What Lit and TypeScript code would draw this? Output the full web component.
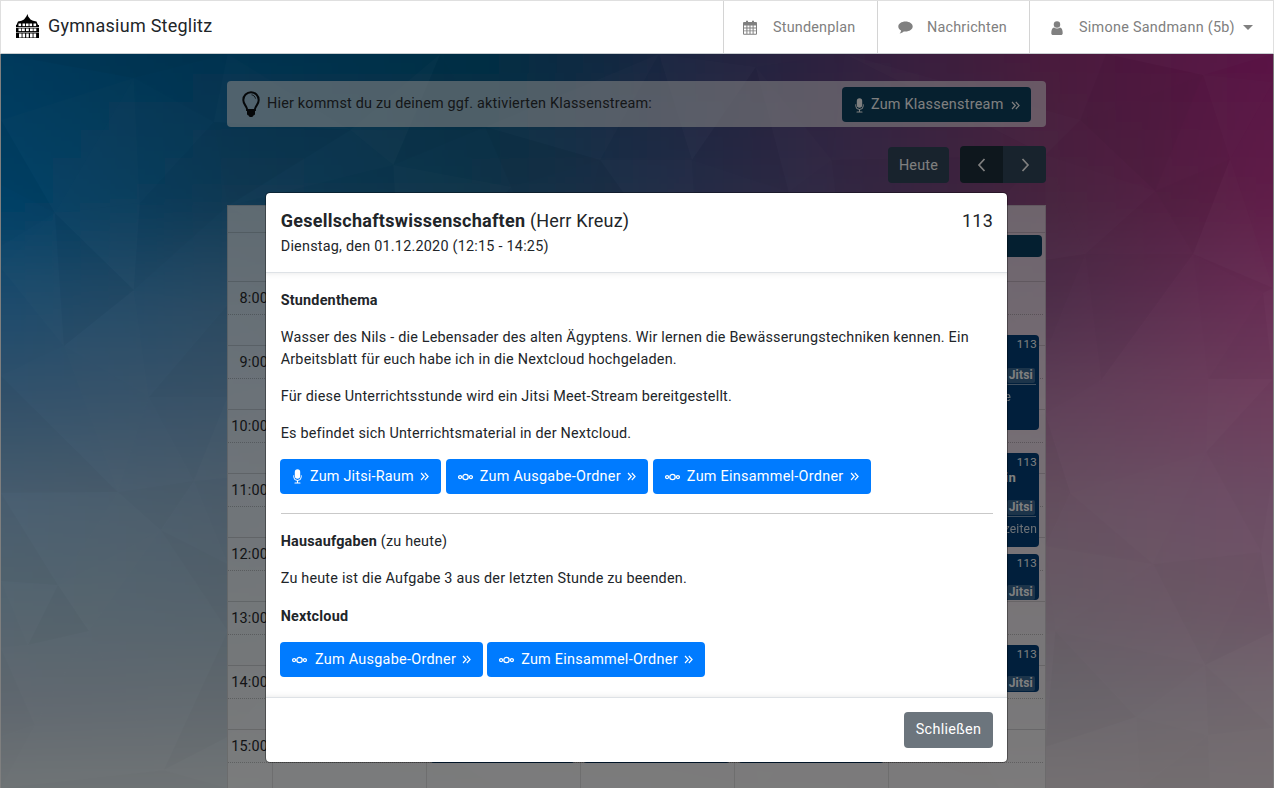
import { LitElement, html, css, svg } from "lit";
import { customElement } from "lit/decorators.js";

/* ---------- low-poly backdrop ---------- */
type P = [number, number];
const PTS: P[] = [
  [0,54],[227,54],[440,54],[659,54],[845,54],[1107,54],[1274,54],
  [133,78],[213,122],[54,213],[139,203],[227,206],[0,120],[0,185],[0,246],[0,268],[133,290],[227,305],[63,346],[0,376],
  [148,397],[227,397],[117,492],[0,493],[193,481],[227,478],[160,530],[57,585],[0,581],[227,564],[88,631],[227,631],[27,645],[0,648],[34,725],[0,737],[163,770],[227,737],[0,788],[227,788],
  [350,130],[485,127],[393,165],[511,187],[600,160],[692,160],[756,67],[789,192],[832,160],
  [400,300],[560,330],[700,300],[850,320],[950,250],[420,450],[600,420],[780,470],[950,430],[350,600],[550,620],[720,580],[900,600],[420,740],[620,760],[820,720],[500,788],[760,788],[1000,788],
  [1081,120],[1204,75],[1231,159],[1274,82],[1156,191],[1046,155],[1086,254],[1194,254],[1264,293],[1274,288],[1046,260],[1102,380],[1209,379],[1274,379],[1046,354],[1207,452],[1274,473],[1071,493],[1046,414],[1154,564],[1262,552],[1046,546],[1056,631],[1206,665],[1274,632],[1137,717],[1209,735],[1274,728],[1046,747],[1141,788],[1211,788],[1274,788],
];

function delaunay(pts: P[]): [number, number, number][] {
  const all: P[] = [...pts, [-5000, -5000], [7000, -5000], [637, 9000]];
  const n = pts.length;
  let tris: [number, number, number][] = [[n, n + 1, n + 2]];
  const inCircle = (t: [number, number, number], p: P) => {
    const [a, b, c] = t.map((i) => all[i]);
    const ax = a[0] - p[0], ay = a[1] - p[1];
    const bx = b[0] - p[0], by = b[1] - p[1];
    const cx = c[0] - p[0], cy = c[1] - p[1];
    const d =
      (ax * ax + ay * ay) * (bx * cy - cx * by) -
      (bx * bx + by * by) * (ax * cy - cx * ay) +
      (cx * cx + cy * cy) * (ax * by - bx * ay);
    const o = (b[0] - a[0]) * (c[1] - a[1]) - (b[1] - a[1]) * (c[0] - a[0]);
    return o > 0 ? d > 0 : d < 0;
  };
  pts.forEach((p, i) => {
    const bad = tris.filter((t) => inCircle(t, p));
    const edges = new Map<string, [number, number]>();
    for (const t of bad) {
      for (const [u, v] of [[t[0], t[1]], [t[1], t[2]], [t[2], t[0]]]) {
        const k = u < v ? `${u}_${v}` : `${v}_${u}`;
        if (edges.has(k)) edges.delete(k);
        else edges.set(k, [u, v]);
      }
    }
    tris = tris.filter((t) => !bad.includes(t));
    edges.forEach(([u, v]) => tris.push([u, v, i]));
  });
  return tris.filter((t) => t.every((i) => i < n));
}

const XS = [0, 227, 480, 700, 1046, 1274];
const YS = [54, 200, 300, 400, 500, 600, 700, 788];
const GRID = [
  "003a5c 003350 012f45 1e2440 481a3c 5a1245",
  "004168 103a55 0f3348 252c47 46233e 601c48",
  "1c4c6e 2a4a62 30424f 3f3a50 4f2f4b 6a2e56",
  "33526c 3a5368 454c5e 504858 5f4058 703e5e",
  "4a6072 4c5c6a 555a66 5e5664 665060 6f4e67",
  "546570 54626c 5b606a 605c66 665a64 6f5667",
  "606870 626a70 656770 68666c 6a666c 72676f",
  "6f7476 707476 727374 737273 74707272 756f71",
].map((r) => r.split(" ").map((h) => [0, 2, 4].map((i) => parseInt(h.slice(i, i + 2), 16))));

const seg = (arr: number[], v: number): [number, number] => {
  for (let i = 0; i < arr.length - 1; i++) {
    if (v <= arr[i + 1]) return [i, Math.max(0, (v - arr[i]) / (arr[i + 1] - arr[i]))];
  }
  return [arr.length - 2, 1];
};

function colour(x: number, y: number): string {
  const [i, u] = seg(XS, x);
  const [j, v] = seg(YS, y);
  const c = [0, 1, 2].map((k) => {
    const top = GRID[j][i][k] * (1 - u) + GRID[j][i + 1][k] * u;
    const bot = GRID[j + 1][i][k] * (1 - u) + GRID[j + 1][i + 1][k] * u;
    return Math.min(255, Math.round((top * (1 - v) + bot * v) * 2));
  });
  return `rgb(${c.join(",")})`;
}

const BASE: { x: number; y: number; fill: string }[] = [];
for (let x = -60; x < 1340; x += 28) {
  for (let y = -10; y < 850; y += 28) {
    BASE.push({ x, y, fill: colour(x + 14, y + 14) });
  }
}

const FACETS = delaunay(PTS).map((t, idx) => {
  const [a, b, c] = t.map((i) => PTS[i]);
  const s = ((idx * 37) % 7) - 3;
  const cy = (a[1] + b[1] + c[1]) / 3;
  return {
    points: `${a[0]},${a[1]} ${b[0]},${b[1]} ${c[0]},${c[1]}`,
    fill: s > 0 ? "#fff" : "#000",
    opacity: Math.abs(s) * (0.012 - 0.006 * Math.min(1, cy / 788)),
  };
});

/* ---------- icons ---------- */
const mic = () => html`<svg class="ico mic" width="9" height="15" viewBox="0 0 9 15" aria-hidden="true">
  <rect x="1.8" y="0.3" width="5.4" height="9.4" rx="2.7" fill="currentColor" />
  <path d="M.7 6.4v1.3a3.8 3.8 0 0 0 7.6 0V6.4" fill="none" stroke="currentColor" stroke-width="1" />
  <path d="M4.5 11.5v2M2 14h5" fill="none" stroke="currentColor" stroke-width="1.1" stroke-linecap="round" />
</svg>`;
const dbl = () => html`<svg class="ico dbl" width="9" height="9" viewBox="0 0 9 9" aria-hidden="true">
  <path d="M1 1l3.3 3.5L1 8M4.8 1l3.3 3.5L4.8 8" fill="none" stroke="currentColor" stroke-width="1.15" />
</svg>`;
const cloud = () => html`<svg class="ico" width="15" height="8" viewBox="0 0 15 8" aria-hidden="true">
  <g fill="none" stroke="currentColor" stroke-width="1.25">
    <circle cx="7.5" cy="4" r="2.7" /><circle cx="2.1" cy="4" r="1.5" /><circle cx="12.9" cy="4" r="1.5" />
  </g>
</svg>`;
const calendar = () => html`<svg class="ico" width="14" height="15" viewBox="0 0 14 15" aria-hidden="true">
  <path fill="currentColor" fill-rule="evenodd" d="M1 2h2V.8h2V2h4V.8h2V2h2a1 1 0 0 1 1 1v10.8a1 1 0 0 1-1 1H1a1 1 0 0 1-1-1V3a1 1 0 0 1 1-1zM1 5.5v2h2.4v-2zM4.4 5.5v2h2.1v-2zM7.5 5.5v2h2.1v-2zM10.6 5.5v2H13v-2zM1 8.4v2h2.4v-2zM4.4 8.4v2h2.1v-2zM7.5 8.4v2h2.1v-2zM10.6 8.4v2H13v-2zM1 11.3v2.4h2.4v-2.4zM4.4 11.3v2.4h2.1v-2.4zM7.5 11.3v2.4h2.1v-2.4zM10.6 11.3v2.4H13v-2.4z" />
</svg>`;
const comment = () => html`<svg class="ico" width="15" height="13" viewBox="0 0 15 13" aria-hidden="true">
  <path fill="currentColor" d="M7.5.5c4 0 7.2 2.2 7.2 5s-3.200 5-7.200 5c-.6 0-1.200 0-1.800-.1C4.700 11.400 3.200 12.300 1.500 12.600c.8-.8 1.400-1.700 1.600-3C1.300 8.700.3 7.200.3 5.500c0-2.800 3.200-5 7.200-5z" />
</svg>`;
const user = () => html`<svg class="ico" width="12" height="14" viewBox="0 0 11 13" aria-hidden="true">
  <circle cx="5.500" cy="3.300" r="3" fill="currentColor" />
  <path fill="currentColor" d="M.2 11.300c0-3 .8-5 2.600-5.300.7.600 1.600.9 2.700.9s2-.3 2.700-.9c1.800.3 2.600 2.300 2.600 5.300 0 1-.7 1.700-1.700 1.700H1.900C.9 13 .2 12.300.2 11.300z" />
</svg>`;
const bulb = () => html`<svg class="bulb" width="18" height="27" viewBox="0 0 18 27" aria-hidden="true">
  <path d="M9 1.300a7.700 7.700 0 0 0-7.700 7.700c0 3.600 2.300 5 3.400 8 .3.800.4 1.500.4 2h7.800c0-.5.100-1.200.4-2 1.100-3 3.400-4.400 3.400-8A7.700 7.700 0 0 0 9 1.300z" fill="none" stroke="#0b0f12" stroke-width="2" />
  <path d="M5 18.500h8v4.200c0 1-.8 1.500-1.600 1.700-.3 1-1.200 1.600-2.400 1.600s-2.100-.6-2.400-1.600C5.800 24.200 5 23.700 5 22.700z" fill="#0b0f12" />
  <path d="M9.500 3.800c2 .2 3.700 1.800 4 3.800" fill="none" stroke="#0b0f12" stroke-width=".8" />
</svg>`;
const school = () => html`<svg class="logo" width="23" height="24" viewBox="0 0 23 24" aria-hidden="true">
  <path fill="#000" d="M11.500 0l.7 2.600 2.300 2.900 2.500 1.300 3.500.7 1.500 3.500H23V24H0V11h.5L2 7.500l3.500-.7L8 5.500l2.300-2.900z" />
  <g fill="#fff">
    ${[2.5, 6.5, 10, 13.500, 17.500].map((x) => svg`<rect x=${x} y="9.500" width="2.600" height="2.600" />`)}
    ${[2.5, 6, 10, 14, 17.500].map((x) => svg`<rect x=${x} y="14.500" width="2.800" height="2.600" />`)}
    ${[3, 6.500, 10.200, 14, 17.500].map((x) => svg`<rect x=${x} y="19.500" width="2.600" height="4" />`)}
    <rect x="0" y="13" width="23" height=".7" />
    <rect x="0" y="18.300" width="23" height=".5" />
  </g>
</svg>`;
const chev = (d: string) => html`<svg width="10" height="16" viewBox="0 0 10 16" aria-hidden="true">
  <path d=${d} fill="none" stroke="currentColor" stroke-width="1.700" />
</svg>`;

const HOURS = ["8:00", "9:00", "10:00", "11:00", "12:00", "13:00", "14:00", "15:00"];

interface Ev { l: number; t: number; w: number; h: number; room?: string; jitsi?: number; bold?: string; note?: string; noteEnd?: number; noteTop?: number; }
const EVENTS: Ev[] = [
  { l: 665, t: 29, w: 149, h: 22 },
  { l: 665, t: 129, w: 146, h: 95, room: "113", jitsi: 33, note: "Aufgabe", noteEnd: 28, noteTop: 53 },
  { l: 665, t: 247, w: 146, h: 94, room: "113", bold: "Latein", jitsi: 47, note: "Sprechzeiten", noteEnd: 2, noteTop: 67 },
  { l: 665, t: 348, w: 146, h: 46, room: "113", jitsi: 31 },
  { l: 665, t: 439, w: 146, h: 47, room: "113", jitsi: 31 },
  { l: 202, t: 494, w: 145, h: 63 },
  { l: 355, t: 494, w: 147, h: 63 },
  { l: 510, t: 494, w: 146, h: 63 },
];

@customElement("app-root")
export class AppRoot extends LitElement {
  static styles = css`
    :host {
      display: flex;
      flex-direction: column;
      width: 100%;
      height: 100vh;
      overflow: hidden;
      background: #fff;
      font-family: Roboto, "Liberation Sans", sans-serif;
      font-size: 14.4px;
      line-height: 21.6px;
      letter-spacing: 0.2px;
      color: #212529;
    }
    * { box-sizing: border-box; }
    svg { display: block; flex: none; }

    /* navbar */
    .nav {
      flex: none;
      height: 54px;
      display: flex;
      align-items: stretch;
      background: #fff;
      border: 1px solid #dfdfdf;
      border-bottom-color: #c9ced1;
    }
    .brand {
      display: flex;
      align-items: center;
      gap: 9px;
      margin-left: 15px;
      padding-bottom: 2px;
      font-size: 18px;
      letter-spacing: 0.25px;
      color: #212529;
      margin-right: auto;
    }
    .item {
      flex: none;
      width: 154px;
      display: flex;
      align-items: center;
      border-left: 1px solid #d4d4d4;
      padding: 1px 0 0 19px;
      color: #808080;
    }
    .item .ico { color: #808080; }
    .item .txt { margin-left: 16px; }
    .item.c { width: 152px; padding-left: 20px; }
    .item.c .txt { margin-left: 14px; }
    .item.u { width: 244px; padding-left: 21px; letter-spacing: 0.27px; }
    .caret {
      margin-left: 8px;
      border-top: 5px solid #808080;
      border-left: 5px solid transparent;
      border-right: 5px solid transparent;
    }

    /* page */
    .page {
      position: relative;
      flex: 1;
      min-height: 0;
      overflow: hidden;
      padding: 27px 0 0 227px;
    }
    .bg {
      position: absolute;
      left: 1px;
      top: 0;
      width: 1272px;
      height: 734px;
    }
    .wrap {
      position: relative;
      width: 819px;
    }
    .alert {
      height: 46px;
      display: flex;
      align-items: center;
      padding: 0 15px 0 15px;
      background: rgba(255, 255, 255, 0.6);
      border-radius: 4px;
    }
    .alert .lead { margin-left: 7px; color: #2a2e32; }
    .alert .btn { margin: 1px 0 0 auto; padding-top: 1px; padding-right: 11.5px; letter-spacing: 0.25px; }
    .alert .btn .mic { margin-right: 7px; }
    .btn {
      display: inline-flex;
      align-items: center;
      height: 35px;
      padding: 0 12px;
      border-radius: 4px;
      color: #fff;
      white-space: nowrap;
      letter-spacing: 0.28px;
    }
    .btn .mic { margin: 0 8px 0 1px; }
    .btn .dbl { margin-left: 7px; }
    .btn.dark { background: #0c405e; }
    .bar {
      display: flex;
      justify-content: flex-end;
      align-items: center;
      margin-top: 19px;
      gap: 11px;
    }
    .heute {
      display: flex;
      align-items: center;
      justify-content: center;
      width: 61px;
      height: 36px;
      padding-top: 2px;
      background: #30465a;
      color: #fff;
      border-radius: 4px;
    }
    .group { display: flex; height: 37px; border-radius: 4px; overflow: hidden; }
    .group div {
      width: 43px;
      display: flex;
      align-items: center;
      justify-content: center;
      color: #fff;
      background: #30465a;
    }
    .group div.on { background: #1c2e3a; }

    .cal {
      position: relative;
      margin-top: 22px;
      background: rgba(255, 255, 255, 0.7);
      border: 1px solid rgba(0, 0, 0, 0.12);
      border-bottom: 0;
    }
    .row {
      position: relative;
      display: grid;
      grid-template-columns: 45px repeat(4, 154px) 1fr;
      border-bottom: 1px solid rgba(0, 0, 0, 0.14);
    }
    .row > div { border-right: 1px solid rgba(0, 0, 0, 0.1); }
    .row > div:last-child { border-right: 0; }
    .h1 { height: 27px; }
    .h2 { height: 49px; }
    .hour { height: 64px; }
    .hour::after {
      content: "";
      position: absolute;
      left: 0;
      right: 2px;
      top: 32px;
      border-top: 1px dotted rgba(0, 0, 0, 0.22);
    }
    .time { padding: 6px 4px 0 0; text-align: right; white-space: nowrap; color: #26292c; }
    .ev {
      position: absolute;
      background: #023e78;
      border-radius: 4px;
      color: #fff;
      overflow: hidden;
      font-size: 12px;
      line-height: 18px;
    }
    .ev.head { background: #083e60; }
    .ev .room { position: absolute; right: 2px; top: 0; font-size: 11.5px; letter-spacing: 0.3px; }
    .ev .nm { position: absolute; right: 23px; top: 16px; font-weight: 700; white-space: nowrap; font-size: 13px; }
    .ev .jitsi {
      position: absolute;
      right: 4px;
      padding: 0 2px;
      height: 15px;
      line-height: 15px;
      font-weight: 700;
      background: rgba(255, 255, 255, 0.22);
      border-radius: 2px;
    }
    .ev .note {
      position: absolute;
      white-space: nowrap;
      opacity: 0.85;
      font-size: 12px;
    }
    .ev .rule { position: absolute; left: 0; right: 3px; height: 1px; background: rgba(255, 255, 255, 0.5); }

    /* modal */
    .backdrop {
      position: absolute;
      inset: 0;
      background: rgba(0, 0, 0, 0.5);
      padding: 138px 1px 0 0;
      display: flex;
      justify-content: center;
      align-items: flex-start;
    }
    .modal {
      width: 743px;
      background: #fff;
      border: 1px solid rgba(0, 0, 0, 0.35);
      background-clip: padding-box;
      border-radius: 5px;
    }
    .mh {
      display: flex;
      justify-content: space-between;
      padding: 14px 14px 0 15px;
      height: 80px;
      border-bottom: 1px solid #dee2e6;
    }
    .title { font-size: 18px; line-height: 27px; letter-spacing: 0.18px; margin-left: -0.3px; }
    .title b { font-weight: 700; letter-spacing: 0.26px; }
    .date { margin: 2px 0 0 -0.3px; letter-spacing: 0.23px; }
    .roomno { font-size: 18px; line-height: 27px; letter-spacing: 0.2px; }
    .mb {
      height: 424px;
      padding: 17px 14px 0 14.7px;
      box-shadow: inset 0 7px 6px -7px rgba(0, 0, 0, 0.1), inset 0 -7px 6px -7px rgba(0, 0, 0, 0.1);
    }
    .mb p { margin: 0 0 15.6px; }
    .mb p.nc { margin-top: 16.4px; }
    .mb b { font-weight: 700; }
    .btns { display: flex; margin: -1.6px 0 0 -0.7px; gap: 5px; }
    .btns.tight { gap: 4px; }
    .btn.blue { background: #007bff; padding-top: 2px; }
    .btn.blue .ico { margin-top: -1px; }
    .btns .btn:first-child { letter-spacing: 0.2px; }
    .btns .cl { letter-spacing: 0.28px !important; }
    .btns .cl .ico:first-child { margin-right: 7px; }
    .btns.tight .cl:first-child .ico:first-child { margin-right: 8px; }
    .btns .btn .dbl { margin-left: 6px; }
    .btns.tight .cl:first-child .dbl { margin-left: 6px; }
    .mb hr {
      margin: 19px 0 17px;
      border: 0;
      border-top: 1px solid #c9c9c9;
    }
    .mf {
      height: 65px;
      display: flex;
      justify-content: flex-end;
      align-items: center;
      padding: 0 14px;
      border-top: 1px solid #dee2e6;
    }
    .close {
      width: 89px;
      height: 36px;
      display: flex;
      align-items: center;
      justify-content: center;
      color: #fff;
      background: #6c757d;
      border-radius: 4px;
      letter-spacing: 0.3px;
    }
  `;

  private renderEvent(e: Ev) {
    const box = `left:${e.l}px;top:${e.t}px;width:${e.w}px;height:${e.h}px`;
    return html`<div class="ev ${e.h === 22 ? "head" : ""}" style=${box}>
      ${e.room ? html`<span class="room">${e.room}</span>` : ""}
      ${e.bold ? html`<span class="nm">${e.bold}</span>` : ""}
      ${e.jitsi !== undefined
        ? html`<span class="jitsi" style="top:${e.jitsi}px">Jitsi</span>
            ${e.note ? html`<span class="rule" style="top:${e.jitsi + 16}px"></span>` : ""}`
        : ""}
      ${e.note ? html`<span class="note" style="right:${e.noteEnd}px;top:${e.noteTop}px">${e.note}</span>` : ""}
    </div>`;
  }

  render() {
    const cells = html`<div></div><div></div><div></div><div></div><div></div>`;
    return html`
      <header class="nav">
        <div class="brand">${school()}<span>Gymnasium Steglitz</span></div>
        <div class="item">${calendar()}<span class="txt">Stundenplan</span></div>
        <div class="item c">${comment()}<span class="txt">Nachrichten</span></div>
        <div class="item u">${user()}<span class="txt">Simone Sandmann (5b)</span><span class="caret"></span></div>
      </header>

      <main class="page">
        <svg class="bg" viewBox="0 54 1274 734" preserveAspectRatio="none" aria-hidden="true">
          <defs>
            <filter id="soft" x="-5%" y="-5%" width="110%" height="110%"><feGaussianBlur stdDeviation="16" /></filter>
          </defs>
          <g filter="url(#soft)">
            ${BASE.map((r) => svg`<rect x=${r.x} y=${r.y} width="29" height="29" fill=${r.fill} />`)}
          </g>
          ${FACETS.map((t) => svg`<polygon points=${t.points} fill=${t.fill} fill-opacity=${t.opacity} />`)}
        </svg>

        <div class="wrap">
          <div class="alert">
            ${bulb()}
            <span class="lead">Hier kommst du zu deinem ggf. aktivierten Klassenstream:</span>
            <span class="btn dark">${mic()}Zum Klassenstream${dbl()}</span>
          </div>
          <div class="bar">
            <div class="heute">Heute</div>
            <div class="group">
              <div class="on">${chev("M7.500 2L2 8l5.500 6")}</div>
              <div>${chev("M2.500 2L8 8l-5.500 6")}</div>
            </div>
          </div>
          <div class="cal">
            <div class="row h1"><div></div>${cells}</div>
            <div class="row h2"><div></div>${cells}</div>
            ${HOURS.map((h) => html`<div class="row hour"><div class="time">${h}</div>${cells}</div>`)}
            ${EVENTS.map((e) => this.renderEvent(e))}
          </div>
        </div>

        <div class="backdrop">
          <section class="modal">
            <div class="mh">
              <div>
                <div class="title"><b>Gesellschaftswissenschaften</b> (Herr Kreuz)</div>
                <div class="date">Dienstag, den 01.12.2020 (12:15 - 14:25)</div>
              </div>
              <div class="roomno">113</div>
            </div>
            <div class="mb">
              <p><b>Stundenthema</b></p>
              <p>Wasser des Nils - die Lebensader des alten Ägyptens. Wir lernen die Bewässerungstechniken kennen. Ein Arbeitsblatt für euch habe ich in die Nextcloud hochgeladen.</p>
              <p>Für diese Unterrichtsstunde wird ein Jitsi Meet-Stream bereitgestellt.</p>
              <p>Es befindet sich Unterrichtsmaterial in der Nextcloud.</p>
              <div class="btns">
                <span class="btn blue">${mic()}Zum Jitsi-Raum${dbl()}</span>
                <span class="btn blue cl">${cloud()}Zum Ausgabe-Ordner${dbl()}</span>
                <span class="btn blue cl">${cloud()}Zum Einsammel-Ordner${dbl()}</span>
              </div>
              <hr />
              <p><b>Hausaufgaben</b> (zu heute)</p>
              <p>Zu heute ist die Aufgabe 3 aus der letzten Stunde zu beenden.</p>
              <p class="nc"><b>Nextcloud</b></p>
              <div class="btns tight">
                <span class="btn blue cl">${cloud()}Zum Ausgabe-Ordner${dbl()}</span>
                <span class="btn blue cl">${cloud()}Zum Einsammel-Ordner${dbl()}</span>
              </div>
            </div>
            <div class="mf"><div class="close">Schließen</div></div>
          </section>
        </div>
      </main>
    `;
  }
}
